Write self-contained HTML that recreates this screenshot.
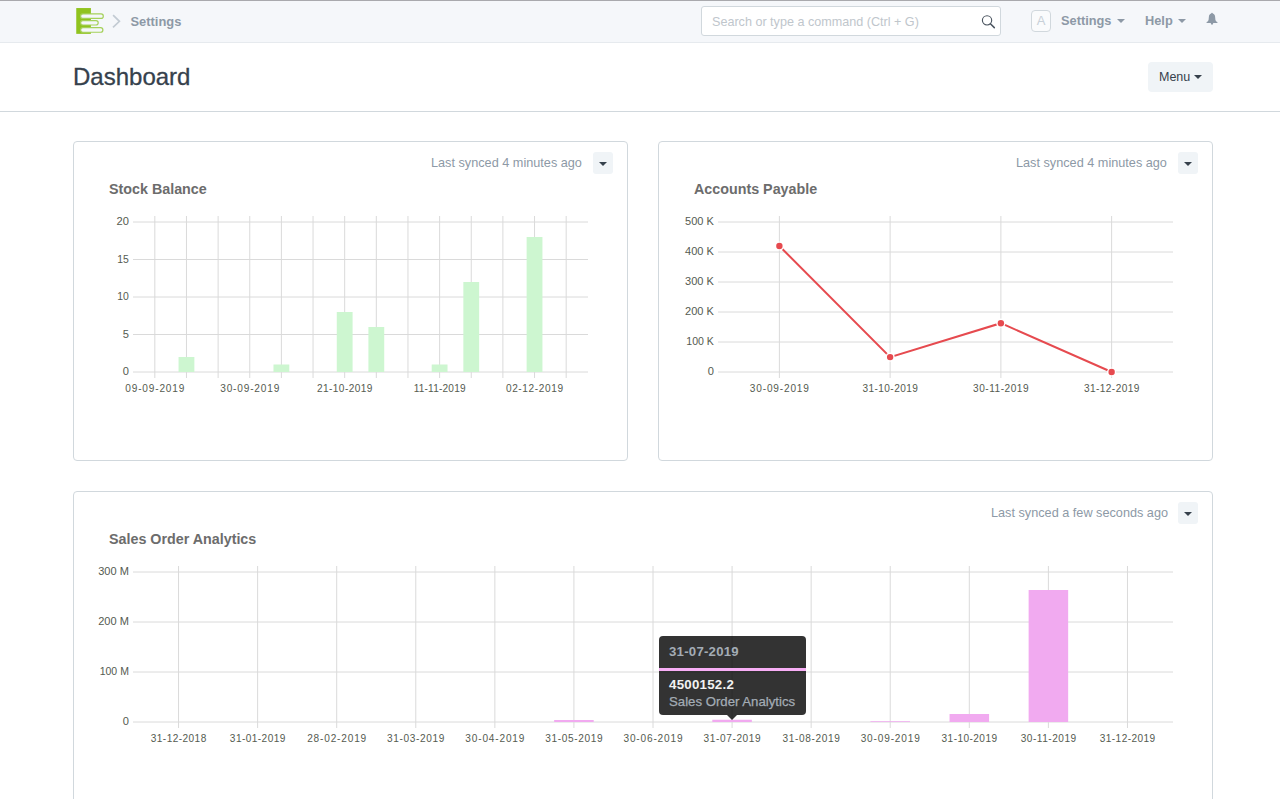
<!DOCTYPE html>
<html><head><meta charset="utf-8">
<style>
*{box-sizing:border-box}
html,body{margin:0;padding:0;width:1280px;height:799px;overflow:hidden;background:#fff;font-family:"Liberation Sans",sans-serif}
.a{position:absolute;white-space:nowrap}
#nav{position:absolute;left:0;top:0;width:1280px;height:43px;background:#f5f7fa;border-top:1px solid #a9a9ad;border-bottom:1px solid #e6eaee}
.muted{color:#8d99a6}
.card{position:absolute;border:1px solid #d1d8dd;border-radius:4px;background:#fff}
.sync{font-size:12.7px;color:#8d99a6}
.ddbtn{position:absolute;width:20px;height:22px;background:#f0f4f7;border-radius:3px}
.ddbtn:after{content:"";position:absolute;left:6px;top:10px;border-left:4px solid transparent;border-right:4px solid transparent;border-top:4px solid #36414c}
.ctitle{font-size:14.3px;font-weight:bold;color:#6c6c6c}
svg text{font-family:"Liberation Sans",sans-serif}
</style></head><body>
<div id="nav"></div>
<!-- logo -->
<svg class="a" style="left:74px;top:6px" width="34" height="30" viewBox="0 0 34 30">
  <rect x="2.25" y="2.05" width="14.65" height="25.8" fill="#90c31e"/>
  <rect x="6.6" y="7.95" width="22.7" height="4.4" rx="2.2" fill="#f5f7fa" stroke="#a5d15a" stroke-width="1.2"/>
  <rect x="6.6" y="14.6" width="17.6" height="4.4" rx="2.2" fill="#f5f7fa" stroke="#a5d15a" stroke-width="1.2"/>
  <rect x="6.6" y="21.65" width="22.3" height="4.6" rx="2.3" fill="#f5f7fa" stroke="#a5d15a" stroke-width="1.2"/>
</svg>
<svg class="a" style="left:111px;top:14px" width="10" height="15" viewBox="0 0 10 15"><path d="M2.1 1.2 L8.4 7.3 L2 13.4" fill="none" stroke="#c3cbd3" stroke-width="1.7"/></svg>
<div class="a muted" style="left:130.5px;top:14px;font-size:12.9px;font-weight:bold">Settings</div>

<!-- search -->
<div class="a" style="left:701px;top:6px;width:300px;height:30px;border:1px solid #d1d8dd;border-radius:3px;background:#fff"></div>
<div class="a" style="left:712px;top:15px;font-size:12.6px;color:#c0c6cc">Search or type a command (Ctrl + G)</div>
<svg class="a" style="left:980px;top:15px" width="18" height="16" viewBox="0 0 18 16"><circle cx="7.05" cy="5.35" r="4.65" fill="none" stroke="#4b5560" stroke-width="1.15"/><path d="M10.4 8.7 L14.3 12.6" stroke="#4b5560" stroke-width="1.5" stroke-linecap="round"/></svg>

<div class="a" style="left:1031px;top:10px;width:20px;height:22px;border:1px solid #d1d8dd;border-radius:4px;background:#fafbfc;color:#c8d0d8;font-size:13px;text-align:center;line-height:19px">A</div>
<div class="a muted" style="left:1061px;top:13px;font-size:12.8px;font-weight:bold">Settings</div>
<div class="a" style="left:1117px;top:19px;border-left:4px solid transparent;border-right:4px solid transparent;border-top:4px solid #8d99a6"></div>
<div class="a muted" style="left:1145px;top:13px;font-size:12.8px;font-weight:bold">Help</div>
<div class="a" style="left:1178px;top:19px;border-left:4px solid transparent;border-right:4px solid transparent;border-top:4px solid #8d99a6"></div>
<svg class="a" style="left:1206px;top:12px" width="12" height="14" viewBox="0 0 12 14"><path d="M6 0.7 C6.5 0.7 6.8 1.1 6.8 1.6 C8.3 2.0 9.0 3.2 9.1 4.8 L9.4 7.8 C9.6 8.9 10.5 9.6 11.4 10.1 L11.4 10.9 L0.6 10.9 L0.6 10.1 C1.5 9.6 2.4 8.9 2.6 7.8 L2.9 4.8 C3.0 3.2 3.7 2.0 5.2 1.6 C5.2 1.1 5.5 0.7 6 0.7 Z M4.4 10.5 L7.6 10.5 L6.6 12.4 C6.3 12.8 5.7 12.8 5.4 12.4 Z" fill="#8d99a6"/></svg>

<!-- page head -->
<div class="a" style="left:73px;top:63px;font-size:24px;color:#36414c;-webkit-text-stroke:0.3px #36414c">Dashboard</div>
<div class="a" style="left:1148px;top:62px;width:65px;height:30px;background:#f0f4f7;border-radius:4px"></div>
<div class="a" style="left:1159px;top:70px;font-size:12.5px;color:#36414c">Menu</div>
<div class="a" style="left:1194px;top:75px;border-left:4px solid transparent;border-right:4px solid transparent;border-top:4px solid #36414c"></div>
<div class="a" style="left:0;top:111px;width:1280px;height:1px;background:#d1d8dd"></div>

<!-- cards -->
<div class="card" style="left:73px;top:141px;width:555px;height:320px"></div>
<div class="card" style="left:658px;top:141px;width:555px;height:320px"></div>
<div class="card" style="left:73px;top:491px;width:1140px;height:340px"></div>

<div class="a sync" style="left:431px;top:156px">Last synced 4 minutes ago</div>
<div class="ddbtn" style="left:593px;top:152px"></div>
<div class="a ctitle" style="left:109px;top:181px">Stock Balance</div>

<div class="a sync" style="left:1016px;top:156px">Last synced 4 minutes ago</div>
<div class="ddbtn" style="left:1178px;top:152px"></div>
<div class="a ctitle" style="left:694px;top:181px">Accounts Payable</div>

<div class="a sync" style="left:991px;top:506px">Last synced a few seconds ago</div>
<div class="ddbtn" style="left:1178px;top:502px"></div>
<div class="a ctitle" style="left:109px;top:531px">Sales Order Analytics</div>

<!-- CHARTS -->
<svg class="a" style="left:0;top:0" width="1280" height="799"><line x1="133" y1="222" x2="588" y2="222" stroke="#dadada" stroke-width="1"/><line x1="133" y1="259.5" x2="588" y2="259.5" stroke="#dadada" stroke-width="1"/><line x1="133" y1="297" x2="588" y2="297" stroke="#dadada" stroke-width="1"/><line x1="133" y1="334.5" x2="588" y2="334.5" stroke="#dadada" stroke-width="1"/><line x1="133" y1="372" x2="588" y2="372" stroke="#dadada" stroke-width="1"/><line x1="154.82" y1="216" x2="154.82" y2="378" stroke="#dadada" stroke-width="1"/><line x1="186.46" y1="216" x2="186.46" y2="378" stroke="#dadada" stroke-width="1"/><line x1="218.11" y1="216" x2="218.11" y2="378" stroke="#dadada" stroke-width="1"/><line x1="249.75" y1="216" x2="249.75" y2="378" stroke="#dadada" stroke-width="1"/><line x1="281.39" y1="216" x2="281.39" y2="378" stroke="#dadada" stroke-width="1"/><line x1="313.04" y1="216" x2="313.04" y2="378" stroke="#dadada" stroke-width="1"/><line x1="344.68" y1="216" x2="344.68" y2="378" stroke="#dadada" stroke-width="1"/><line x1="376.32" y1="216" x2="376.32" y2="378" stroke="#dadada" stroke-width="1"/><line x1="407.96" y1="216" x2="407.96" y2="378" stroke="#dadada" stroke-width="1"/><line x1="439.61" y1="216" x2="439.61" y2="378" stroke="#dadada" stroke-width="1"/><line x1="471.25" y1="216" x2="471.25" y2="378" stroke="#dadada" stroke-width="1"/><line x1="502.89" y1="216" x2="502.89" y2="378" stroke="#dadada" stroke-width="1"/><line x1="534.54" y1="216" x2="534.54" y2="378" stroke="#dadada" stroke-width="1"/><line x1="566.18" y1="216" x2="566.18" y2="378" stroke="#dadada" stroke-width="1"/><text x="116.5" y="225" font-size="10.1" textLength="12.4" lengthAdjust="spacingAndGlyphs" fill="#555b51">20</text><text x="117.3" y="262.5" font-size="10.1" textLength="11.6" lengthAdjust="spacingAndGlyphs" fill="#555b51">15</text><text x="117.3" y="300" font-size="10.1" textLength="11.6" lengthAdjust="spacingAndGlyphs" fill="#555b51">10</text><text x="122.7" y="337.5" font-size="10.1" textLength="6.2" lengthAdjust="spacingAndGlyphs" fill="#555b51">5</text><text x="122.7" y="375" font-size="10.1" textLength="6.2" lengthAdjust="spacingAndGlyphs" fill="#555b51">0</text><text x="125.27" y="392.1" font-size="10.1" textLength="59.1" lengthAdjust="spacing" fill="#555b51">09-09-2019</text><text x="220.2" y="392.1" font-size="10.1" textLength="59.1" lengthAdjust="spacing" fill="#555b51">30-09-2019</text><text x="316.93" y="392.1" font-size="10.1" textLength="55.5" lengthAdjust="spacing" fill="#555b51">21-10-2019</text><text x="413.66" y="392.1" font-size="10.1" textLength="51.9" lengthAdjust="spacing" fill="#555b51">11-11-2019</text><text x="505.89" y="392.1" font-size="10.1" textLength="57.3" lengthAdjust="spacing" fill="#555b51">02-12-2019</text><rect x="178.55" y="357" width="15.82" height="15" fill="#cdf6d0"/><rect x="273.48" y="364.5" width="15.82" height="7.5" fill="#cdf6d0"/><rect x="336.77" y="312" width="15.82" height="60" fill="#cdf6d0"/><rect x="368.41" y="327" width="15.82" height="45" fill="#cdf6d0"/><rect x="431.7" y="364.5" width="15.82" height="7.5" fill="#cdf6d0"/><rect x="463.34" y="282" width="15.82" height="90" fill="#cdf6d0"/><rect x="526.62" y="237" width="15.82" height="135" fill="#cdf6d0"/>
<line x1="718" y1="222" x2="1173" y2="222" stroke="#dadada" stroke-width="1"/><line x1="718" y1="252" x2="1173" y2="252" stroke="#dadada" stroke-width="1"/><line x1="718" y1="282" x2="1173" y2="282" stroke="#dadada" stroke-width="1"/><line x1="718" y1="312" x2="1173" y2="312" stroke="#dadada" stroke-width="1"/><line x1="718" y1="342" x2="1173" y2="342" stroke="#dadada" stroke-width="1"/><line x1="718" y1="372" x2="1173" y2="372" stroke="#dadada" stroke-width="1"/><line x1="779.38" y1="216" x2="779.38" y2="378" stroke="#dadada" stroke-width="1"/><line x1="890.12" y1="216" x2="890.12" y2="378" stroke="#dadada" stroke-width="1"/><line x1="1000.88" y1="216" x2="1000.88" y2="378" stroke="#dadada" stroke-width="1"/><line x1="1111.62" y1="216" x2="1111.62" y2="378" stroke="#dadada" stroke-width="1"/><text x="685" y="225" font-size="10.1" textLength="28.9" lengthAdjust="spacingAndGlyphs" fill="#555b51">500 K</text><text x="685" y="255" font-size="10.1" textLength="28.9" lengthAdjust="spacingAndGlyphs" fill="#555b51">400 K</text><text x="685" y="285" font-size="10.1" textLength="28.9" lengthAdjust="spacingAndGlyphs" fill="#555b51">300 K</text><text x="685" y="315" font-size="10.1" textLength="28.9" lengthAdjust="spacingAndGlyphs" fill="#555b51">200 K</text><text x="686.3" y="345" font-size="10.1" textLength="27.6" lengthAdjust="spacingAndGlyphs" fill="#555b51">100 K</text><text x="707.7" y="375" font-size="10.1" textLength="6.2" lengthAdjust="spacingAndGlyphs" fill="#555b51">0</text><text x="749.83" y="392.1" font-size="10.1" textLength="59.1" lengthAdjust="spacing" fill="#555b51">30-09-2019</text><text x="862.38" y="392.1" font-size="10.1" textLength="55.5" lengthAdjust="spacing" fill="#555b51">31-10-2019</text><text x="973.12" y="392.1" font-size="10.1" textLength="55.5" lengthAdjust="spacing" fill="#555b51">30-11-2019</text><text x="1083.88" y="392.1" font-size="10.1" textLength="55.5" lengthAdjust="spacing" fill="#555b51">31-12-2019</text><polyline points="779.38,246 890.12,357.09 1000.88,323.19 1111.62,372" fill="none" stroke="#e64a4f" stroke-width="2"/><circle cx="779.38" cy="246" r="4.6" fill="#fff"/><circle cx="779.38" cy="246" r="3.2" fill="#e64a4f"/><circle cx="890.12" cy="357.09" r="4.6" fill="#fff"/><circle cx="890.12" cy="357.09" r="3.2" fill="#e64a4f"/><circle cx="1000.88" cy="323.19" r="4.6" fill="#fff"/><circle cx="1000.88" cy="323.19" r="3.2" fill="#e64a4f"/><circle cx="1111.62" cy="372" r="4.6" fill="#fff"/><circle cx="1111.62" cy="372" r="3.2" fill="#e64a4f"/>
<line x1="133" y1="572" x2="1173" y2="572" stroke="#dadada" stroke-width="1"/><line x1="133" y1="622" x2="1173" y2="622" stroke="#dadada" stroke-width="1"/><line x1="133" y1="672" x2="1173" y2="672" stroke="#dadada" stroke-width="1"/><line x1="133" y1="722" x2="1173" y2="722" stroke="#dadada" stroke-width="1"/><line x1="178.54" y1="566" x2="178.54" y2="728" stroke="#dadada" stroke-width="1"/><line x1="257.62" y1="566" x2="257.62" y2="728" stroke="#dadada" stroke-width="1"/><line x1="336.69" y1="566" x2="336.69" y2="728" stroke="#dadada" stroke-width="1"/><line x1="415.77" y1="566" x2="415.77" y2="728" stroke="#dadada" stroke-width="1"/><line x1="494.85" y1="566" x2="494.85" y2="728" stroke="#dadada" stroke-width="1"/><line x1="573.92" y1="566" x2="573.92" y2="728" stroke="#dadada" stroke-width="1"/><line x1="653" y1="566" x2="653" y2="728" stroke="#dadada" stroke-width="1"/><line x1="732.08" y1="566" x2="732.08" y2="728" stroke="#dadada" stroke-width="1"/><line x1="811.15" y1="566" x2="811.15" y2="728" stroke="#dadada" stroke-width="1"/><line x1="890.23" y1="566" x2="890.23" y2="728" stroke="#dadada" stroke-width="1"/><line x1="969.31" y1="566" x2="969.31" y2="728" stroke="#dadada" stroke-width="1"/><line x1="1048.38" y1="566" x2="1048.38" y2="728" stroke="#dadada" stroke-width="1"/><line x1="1127.46" y1="566" x2="1127.46" y2="728" stroke="#dadada" stroke-width="1"/><text x="98.2" y="575" font-size="10.1" textLength="30.7" lengthAdjust="spacingAndGlyphs" fill="#555b51">300 M</text><text x="98.2" y="625" font-size="10.1" textLength="30.7" lengthAdjust="spacingAndGlyphs" fill="#555b51">200 M</text><text x="99.7" y="675" font-size="10.1" textLength="29.2" lengthAdjust="spacingAndGlyphs" fill="#555b51">100 M</text><text x="122.7" y="725" font-size="10.1" textLength="6.2" lengthAdjust="spacingAndGlyphs" fill="#555b51">0</text><text x="150.79" y="742.1" font-size="10.1" textLength="55.5" lengthAdjust="spacing" fill="#555b51">31-12-2018</text><text x="229.87" y="742.1" font-size="10.1" textLength="55.5" lengthAdjust="spacing" fill="#555b51">31-01-2019</text><text x="307.14" y="742.1" font-size="10.1" textLength="59.1" lengthAdjust="spacing" fill="#555b51">28-02-2019</text><text x="387.12" y="742.1" font-size="10.1" textLength="57.3" lengthAdjust="spacing" fill="#555b51">31-03-2019</text><text x="465.3" y="742.1" font-size="10.1" textLength="59.1" lengthAdjust="spacing" fill="#555b51">30-04-2019</text><text x="545.27" y="742.1" font-size="10.1" textLength="57.3" lengthAdjust="spacing" fill="#555b51">31-05-2019</text><text x="623.45" y="742.1" font-size="10.1" textLength="59.1" lengthAdjust="spacing" fill="#555b51">30-06-2019</text><text x="703.43" y="742.1" font-size="10.1" textLength="57.3" lengthAdjust="spacing" fill="#555b51">31-07-2019</text><text x="782.5" y="742.1" font-size="10.1" textLength="57.3" lengthAdjust="spacing" fill="#555b51">31-08-2019</text><text x="860.68" y="742.1" font-size="10.1" textLength="59.1" lengthAdjust="spacing" fill="#555b51">30-09-2019</text><text x="941.56" y="742.1" font-size="10.1" textLength="55.5" lengthAdjust="spacing" fill="#555b51">31-10-2019</text><text x="1020.63" y="742.1" font-size="10.1" textLength="55.5" lengthAdjust="spacing" fill="#555b51">30-11-2019</text><text x="1099.71" y="742.1" font-size="10.1" textLength="55.5" lengthAdjust="spacing" fill="#555b51">31-12-2019</text><rect x="554.15" y="720" width="39.54" height="2" fill="#f1aaf0"/><rect x="712.31" y="719.75" width="39.54" height="2.25" fill="#f1aaf0"/><rect x="870.46" y="721.25" width="39.54" height="0.75" fill="#f1aaf0"/><rect x="949.54" y="714" width="39.54" height="8" fill="#f1aaf0"/><rect x="1028.62" y="590" width="39.54" height="132" fill="#f1aaf0"/></svg>
<!-- tooltip -->
<div class="a" style="left:659px;top:636px;width:147px;height:79px;background:rgba(0,0,0,0.8);border-radius:4px"></div>
<div class="a" style="left:659px;top:668px;width:147px;height:3px;background:#f7aef5"></div>
<div class="a" style="left:727px;top:715px;width:0;height:0;border-left:5px solid transparent;border-right:5px solid transparent;border-top:5px solid rgba(0,0,0,0.8)"></div>
<div class="a" style="left:669px;top:644px;font-size:13.2px;font-weight:bold;letter-spacing:0.25px;color:#a3acb5">31-07-2019</div>
<div class="a" style="left:669px;top:677px;font-size:13.3px;font-weight:bold;letter-spacing:0.25px;color:#f2f2f2">4500152.2</div>
<div class="a" style="left:669px;top:694px;font-size:13.2px;color:#a3acb5;-webkit-text-stroke:0.25px #a3acb5">Sales Order Analytics</div>
</body></html>
